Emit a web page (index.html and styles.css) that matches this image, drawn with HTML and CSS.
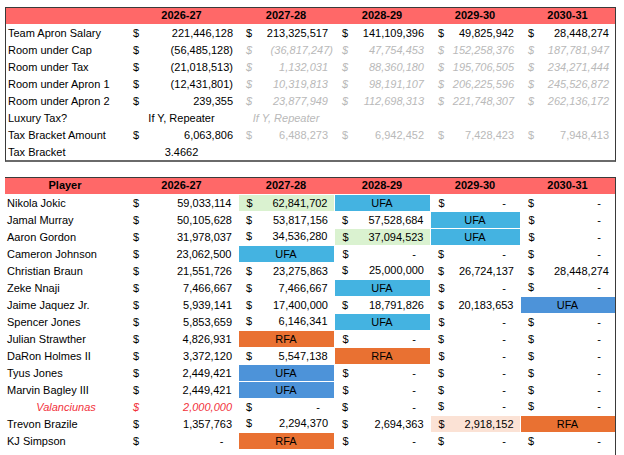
FILE: index.html
```html
<!DOCTYPE html>
<html>
<head>
<meta charset="utf-8">
<link rel="stylesheet" href="styles.css">
</head>
<body>
<div class="sheet">
  <div class="box box-top">
    <table class="grid">
      <colgroup>
        <col class="c-a"><col class="c-b"><col class="c-c"><col class="c-d"><col class="c-e"><col class="c-f">
      </colgroup>
      <tr class="head">
        <th></th><th>2026-27</th><th>2027-28</th><th>2028-29</th><th>2029-30</th><th>2030-31</th>
      </tr>
      <tr>
        <td class="lab">Team Apron Salary</td>
        <td class="n"><span class="d">$</span>221,446,128</td>
        <td class="n"><span class="d">$</span>213,325,517</td>
        <td class="n"><span class="d">$</span>141,109,396</td>
        <td class="n"><span class="d">$</span>49,825,942</td>
        <td class="n"><span class="d">$</span>28,448,274</td>
      </tr>
      <tr>
        <td class="lab">Room under Cap</td>
        <td class="n neg"><span class="d">$</span>(56,485,128)</td>
        <td class="n neg gi"><span class="d">$</span>(36,817,247)</td>
        <td class="n gi"><span class="d">$</span>47,754,453</td>
        <td class="n gi"><span class="d">$</span>152,258,376</td>
        <td class="n gi"><span class="d">$</span>187,781,947</td>
      </tr>
      <tr>
        <td class="lab">Room under Tax</td>
        <td class="n neg"><span class="d">$</span>(21,018,513)</td>
        <td class="n gi"><span class="d">$</span>1,132,031</td>
        <td class="n gi"><span class="d">$</span>88,360,180</td>
        <td class="n gi"><span class="d">$</span>195,706,505</td>
        <td class="n gi"><span class="d">$</span>234,271,444</td>
      </tr>
      <tr>
        <td class="lab">Room under Apron 1</td>
        <td class="n neg"><span class="d">$</span>(12,431,801)</td>
        <td class="n gi"><span class="d">$</span>10,319,813</td>
        <td class="n gi"><span class="d">$</span>98,191,107</td>
        <td class="n gi"><span class="d">$</span>206,225,596</td>
        <td class="n gi"><span class="d">$</span>245,526,872</td>
      </tr>
      <tr>
        <td class="lab">Room under Apron 2</td>
        <td class="n"><span class="d">$</span>239,355</td>
        <td class="n gi"><span class="d">$</span>23,877,949</td>
        <td class="n gi"><span class="d">$</span>112,698,313</td>
        <td class="n gi"><span class="d">$</span>221,748,307</td>
        <td class="n gi"><span class="d">$</span>262,136,172</td>
      </tr>
      <tr>
        <td class="lab">Luxury Tax?</td>
        <td class="ctr">If Y, Repeater</td>
        <td class="ctr gi">If Y, Repeater</td>
        <td></td><td></td><td></td>
      </tr>
      <tr>
        <td class="lab">Tax Bracket Amount</td>
        <td class="n"><span class="d">$</span>6,063,806</td>
        <td class="n g"><span class="d">$</span>6,488,273</td>
        <td class="n g"><span class="d">$</span>6,942,452</td>
        <td class="n g"><span class="d">$</span>7,428,423</td>
        <td class="n g"><span class="d">$</span>7,948,413</td>
      </tr>
      <tr>
        <td class="lab">Tax Bracket</td>
        <td class="ctr">3.4662</td>
        <td></td><td></td><td></td><td></td>
      </tr>
    </table>
  </div>

  <div class="box box-bottom">
    <table class="grid">
      <colgroup>
        <col class="c-a"><col class="c-b"><col class="c-c"><col class="c-d"><col class="c-e"><col class="c-f">
      </colgroup>
      <tr class="head">
        <th>Player</th><th>2026-27</th><th>2027-28</th><th>2028-29</th><th>2029-30</th><th>2030-31</th>
      </tr>
      <tr>
        <td class="lab">Nikola Jokic</td>
        <td class="n"><span class="d">$</span>59,033,114</td>
        <td class="n green"><span class="d">$</span>62,841,702</td>
        <td class="tag ufa">UFA</td>
        <td class="n z"><span class="d">$</span>-</td>
        <td class="n z"><span class="d">$</span>-</td>
      </tr>
      <tr>
        <td class="lab">Jamal Murray</td>
        <td class="n"><span class="d">$</span>50,105,628</td>
        <td class="n"><span class="d">$</span>53,817,156</td>
        <td class="n"><span class="d">$</span>57,528,684</td>
        <td class="tag ufa">UFA</td>
        <td class="n z"><span class="d">$</span>-</td>
      </tr>
      <tr>
        <td class="lab">Aaron Gordon</td>
        <td class="n"><span class="d">$</span>31,978,037</td>
        <td class="n"><span class="d">$</span>34,536,280</td>
        <td class="n green"><span class="d">$</span>37,094,523</td>
        <td class="tag ufa">UFA</td>
        <td class="n z"><span class="d">$</span>-</td>
      </tr>
      <tr>
        <td class="lab">Cameron Johnson</td>
        <td class="n"><span class="d">$</span>23,062,500</td>
        <td class="tag ufa">UFA</td>
        <td class="n z"><span class="d">$</span>-</td>
        <td class="n z"><span class="d">$</span>-</td>
        <td class="n z"><span class="d">$</span>-</td>
      </tr>
      <tr>
        <td class="lab">Christian Braun</td>
        <td class="n"><span class="d">$</span>21,551,726</td>
        <td class="n"><span class="d">$</span>23,275,863</td>
        <td class="n"><span class="d">$</span>25,000,000</td>
        <td class="n"><span class="d">$</span>26,724,137</td>
        <td class="n"><span class="d">$</span>28,448,274</td>
      </tr>
      <tr>
        <td class="lab">Zeke Nnaji</td>
        <td class="n"><span class="d">$</span>7,466,667</td>
        <td class="n"><span class="d">$</span>7,466,667</td>
        <td class="tag ufa">UFA</td>
        <td class="n z"><span class="d">$</span>-</td>
        <td class="n z"><span class="d">$</span>-</td>
      </tr>
      <tr>
        <td class="lab">Jaime Jaquez Jr.</td>
        <td class="n"><span class="d">$</span>5,939,141</td>
        <td class="n"><span class="d">$</span>17,400,000</td>
        <td class="n"><span class="d">$</span>18,791,826</td>
        <td class="n"><span class="d">$</span>20,183,653</td>
        <td class="tag ufa2">UFA</td>
      </tr>
      <tr>
        <td class="lab">Spencer Jones</td>
        <td class="n"><span class="d">$</span>5,853,659</td>
        <td class="n"><span class="d">$</span>6,146,341</td>
        <td class="tag ufa">UFA</td>
        <td class="n z"><span class="d">$</span>-</td>
        <td class="n z"><span class="d">$</span>-</td>
      </tr>
      <tr>
        <td class="lab">Julian Strawther</td>
        <td class="n"><span class="d">$</span>4,826,931</td>
        <td class="tag rfa">RFA</td>
        <td class="n z"><span class="d">$</span>-</td>
        <td class="n z"><span class="d">$</span>-</td>
        <td class="n z"><span class="d">$</span>-</td>
      </tr>
      <tr>
        <td class="lab">DaRon Holmes II</td>
        <td class="n"><span class="d">$</span>3,372,120</td>
        <td class="n"><span class="d">$</span>5,547,138</td>
        <td class="tag rfa">RFA</td>
        <td class="n z"><span class="d">$</span>-</td>
        <td class="n z"><span class="d">$</span>-</td>
      </tr>
      <tr>
        <td class="lab">Tyus Jones</td>
        <td class="n"><span class="d">$</span>2,449,421</td>
        <td class="tag ufa2">UFA</td>
        <td class="n z"><span class="d">$</span>-</td>
        <td class="n z"><span class="d">$</span>-</td>
        <td class="n z"><span class="d">$</span>-</td>
      </tr>
      <tr>
        <td class="lab">Marvin Bagley III</td>
        <td class="n"><span class="d">$</span>2,449,421</td>
        <td class="tag ufa2">UFA</td>
        <td class="n z"><span class="d">$</span>-</td>
        <td class="n z"><span class="d">$</span>-</td>
        <td class="n z"><span class="d">$</span>-</td>
      </tr>
      <tr>
        <td class="lab ctr red">Valanciunas</td>
        <td class="n red"><span class="d">$</span>2,000,000</td>
        <td class="n z"><span class="d">$</span>-</td>
        <td class="n z"><span class="d">$</span>-</td>
        <td class="n z"><span class="d">$</span>-</td>
        <td class="n z"><span class="d">$</span>-</td>
      </tr>
      <tr>
        <td class="lab">Trevon Brazile</td>
        <td class="n"><span class="d">$</span>1,357,763</td>
        <td class="n"><span class="d">$</span>2,294,370</td>
        <td class="n"><span class="d">$</span>2,694,363</td>
        <td class="n peach"><span class="d">$</span>2,918,152</td>
        <td class="tag rfa">RFA</td>
      </tr>
      <tr>
        <td class="lab">KJ Simpson</td>
        <td class="n z"><span class="d">$</span>-</td>
        <td class="tag rfa">RFA</td>
        <td class="n z"><span class="d">$</span>-</td>
        <td class="n z"><span class="d">$</span>-</td>
        <td class="n z"><span class="d">$</span>-</td>
      </tr>
    </table>
  </div>
</div>
</body>
</html>
```

FILE: styles.css
```css
html, body {
  margin: 0;
  padding: 0;
  background: #ffffff;
}

body {
  font-family: "Liberation Sans", Arial, sans-serif;
  font-size: 11px;
  color: #000000;
}

.sheet {
  padding: 7px 0 0 5px;
  width: 611px;
}

.box-top {
  border: 1px solid #3a3a3a;
  border-bottom: 2px solid #6a6a6a;
  width: 609px;
}

.box-bottom {
  margin-top: 15px;
  border-top: 1px solid #3a3a3a;
  border-right: 1px solid #3a3a3a;
  width: 610px;
  height: 278px;
  overflow: hidden;
}

.grid {
  border-collapse: collapse;
  table-layout: fixed;
  width: 609px;
}

.box-bottom .grid {
  width: 610px;
}

.c-a { width: 119px; }
.box-bottom .c-a { width: 120px; }
.c-b { width: 113px; }
.c-c { width: 96px; }
.c-d { width: 96px; }
.c-e { width: 90px; }
.c-f { width: 95px; }

.grid th,
.grid td {
  padding: 0;
  height: 17px;
  line-height: 16px;
  white-space: nowrap;
  overflow: hidden;
  border: 0;
  box-sizing: border-box;
}

.grid .head th {
  background: #ff6868;
  font-weight: bold;
  text-align: center;
  height: 16px;
  line-height: 15px;
  border-bottom: 1px solid #ffffff;
}

.lab {
  padding-left: 2px !important;
  text-align: left;
}

.n {
  text-align: right;
  padding: 0 6px 0 8px !important;
}

.box-top .n:nth-child(2) {
  padding-right: 5px !important;
}

.d {
  float: left;
}

.n.neg {
  padding-right: 1px !important;
}

.n.z {
  padding-right: 14px !important;
}

.ctr {
  text-align: center;
}

.gi {
  color: #b9b9b9;
  font-style: italic;
}

.g {
  color: #b9b9b9;
}

.red {
  color: #f2323c;
  font-style: italic;
}

.tag {
  text-align: center;
  border: 1px solid #ffffff !important;
}

.ufa {
  background: #44b3e1;
}

.ufa2 {
  background: #4d93d9;
}

.rfa {
  background: #e97132;
}

.green {
  background: #daf2d0;
  border: 1px solid #ffffff !important;
}

.peach {
  background: #fbe2d5;
  border: 1px solid #ffffff !important;
}
```
